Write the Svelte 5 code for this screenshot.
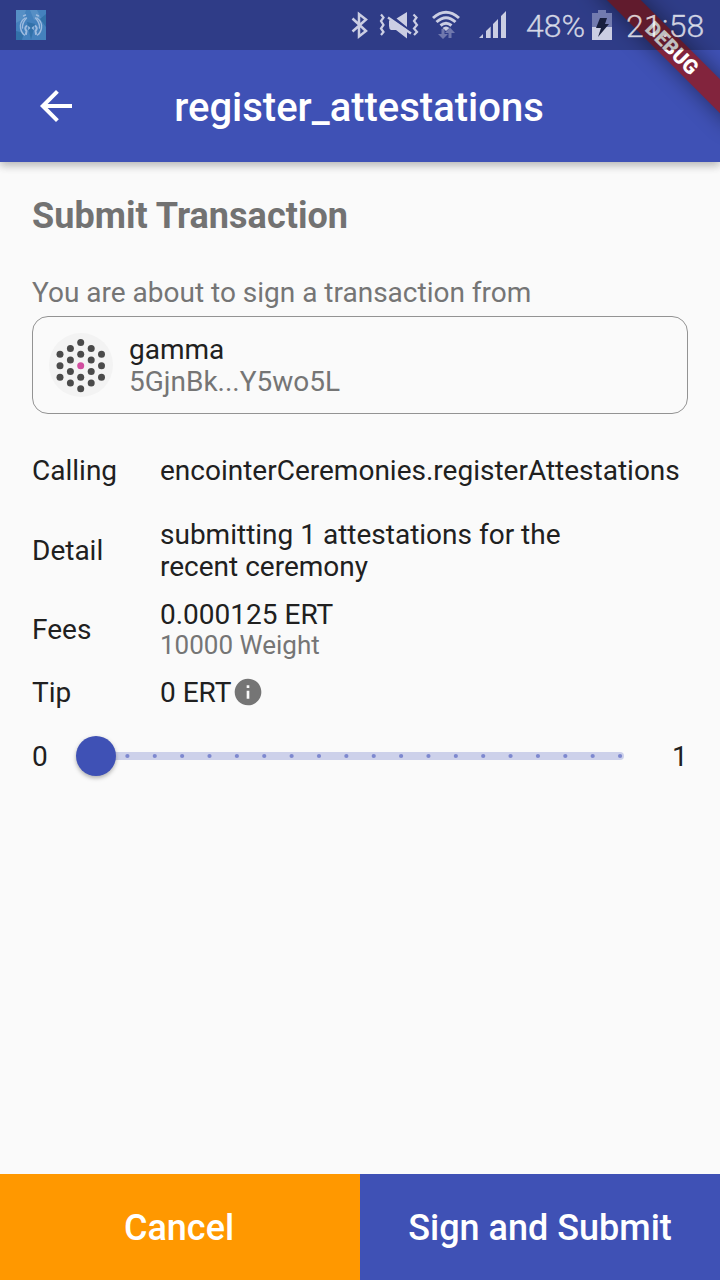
<script>
  const nodes = [
    [31.7, 9.6], [21.4, 15.4], [42.2, 15.4], [11, 21.2], [31.7, 21.2], [52.5, 21.2],
    [21.4, 27], [42.2, 27], [11, 32.8], [52.5, 32.8],
    [21.4, 38.4], [42.2, 38.4], [11, 44.3], [31.7, 44.3], [52.5, 44.3],
    [21.4, 50], [42.2, 50], [31.7, 55.8]
  ];
  const ticks = Array.from({ length: 19 }, (_, i) => 47.4 + i * 27.37);
</script>

<div class="screen">
  <header>
    <svg class="back" width="48" height="48" viewBox="0 0 24 24"><path fill="#fff" d="M20 11H7.83l5.59-5.59L12 4l-8 8 8 8 1.41-1.41L7.83 13H20v-2z" /></svg>
    <h1>register_attestations</h1>
  </header>

  <main>
    <h2>Submit Transaction</h2>
    <p class="intro">You are about to sign a transaction from</p>
    <section class="account">
      <svg width="64" height="64" viewBox="0 0 64 64">
        <circle cx="32" cy="32" r="32" fill="#f3f3f3" />
        {#each nodes as [x, y]}
          <circle cx={x} cy={y} r="3.5" fill="#4a4a4a" />
        {/each}
        <circle cx="31.7" cy="32.8" r="3.5" fill="#d14d9f" />
      </svg>
      <div class="who">
        <span class="name">gamma</span>
        <span class="addr">5GjnBk...Y5wo5L</span>
      </div>
    </section>

    <div class="row calling"><span class="label">Calling</span><span class="val">encointerCeremonies.registerAttestations</span></div>
    <div class="row detail"><span class="label">Detail</span><span class="val">submitting 1 attestations for the<br />recent ceremony</span></div>
    <div class="row fees"><span class="label">Fees</span><span class="val">0.000125 ERT<small>10000 Weight</small></span></div>
    <div class="row tip">
      <span class="label">Tip</span><span class="val">0 ERT</span>
      <svg class="info" width="32" height="32" viewBox="0 0 24 24"><path fill="#757575" d="M12 2C6.48 2 2 6.48 2 12s4.48 10 10 10 10-4.48 10-10S17.52 2 12 2zm1 15h-2v-6h2v6zm0-8h-2V7h2v2z" /></svg>
    </div>
    <div class="slider">
      <span>0</span>
      <svg class="range" width="576" height="64" viewBox="0 0 576 64">
        <path d="M16 28H540a4 4 0 0 1 4 4a4 4 0 0 1-4 4H16z" fill="#cdd1ea" />
        {#each ticks as x}
          <circle cx={x} cy="32" r="2.1" fill="#7d88cf" />
        {/each}
        <circle class="thumb" cx="16" cy="32" r="20" fill="#3f51b5" />
      </svg>
      <span class="max">1</span>
    </div>
  </main>

  <footer>
    <button class="cancel">Cancel</button>
    <button class="submit">Sign and Submit</button>
  </footer>

  <div class="corner"><div class="ribbon">DEBUG</div></div>

  <div class="status">
    <svg class="logo" width="30" height="30" viewBox="0 0 30 30">
      <rect width="30" height="30" fill="#4481bd" />
      <path d="M0 0h10L7 9 0 13zM14 0h7l4 8-7 2z" fill="#568fc5" />
      <path d="M30 4v13l-6-8zM0 21l8 2-2 7H0zM11 12l8 2-4 16z" fill="#3271a9" />
      <g fill="none" stroke="#9dbbdf" stroke-linecap="round">
        <path stroke-width="1.4" d="M7.500 6l2-1M9 8Q3.500 12 4.500 18Q5.500 23 8.500 25M22.500 6l-2-1M21 8Q26.500 12 25.500 18Q24.500 23 21.500 25" />
        <path stroke-width="1.400" d="M10.500 8Q6 13 6.500 18M19.500 8Q24 13 23.500 18M12.500 17l1 1-1 1M17.500 17l-1 1 1 1" />
        <path stroke-width="2" d="M10.500 16Q8 18 10.500 21L10 24M19.500 16Q22 18 19.500 21L20 24" />
      </g>
    </svg>
    <svg width="180" height="50" viewBox="340 0 180 50">
      <g fill="none" stroke="#cbcee3" stroke-width="2.5">
        <path d="M352.500 18.500L366 31L359 36.500V14L366 19.500L352.500 31.500" />
        <path stroke-width="2.200" d="M381 14.500l2.500 3-2.500 3.500 2.500 4-2.500 3.500 2.500 3.500-2.500 3M413.500 14.500l3 3-2.500 3.500 3 4-3 3.500 3 3.500-3 3" />
        <path stroke-width="3" d="M433 18Q446 6.500 459 18M436.500 22Q446 13.500 455.500 22M440.500 25.500Q446 21 451.500 25.500" />
      </g>
      <g fill="#cbcee3">
        <path d="M396.500 18.500L407 12V27zM389 20.500l3-1 15 10V38.500L396 30H391q-2-1-2-4z" />
        <path d="M388 17.500l23 16" stroke="#cbcee3" stroke-width="2.400" />
        <path d="M442.500 28Q446 25 449.500 28L446 31z" />
        <path d="M479 38l4-4v4zM486 31l4.700-4.500V38H486zM493 24l5-5v19h-5zM501 16l5-5v27h-5z" />
      </g>
      <path d="M441.500 29h3v5h3.500l-5 5-5-5h3.500zM448.500 38v-5H445l5-5.500 5 5.500h-3.500v5z" fill="#7078ad" />
    </svg>
    <span class="pct">48%</span>
    <svg class="battery" width="20" height="30" viewBox="0 0 20 30">
      <path d="M0 3h6V0h8v3h6v14H0z" fill="#727baf" />
      <path d="M0 17h20v13H0z" fill="#cbcee3" />
      <path d="M8 8h7l-2 6h4L6 27l3-9H4z" fill="#181f3d" />
    </svg>
    <span class="time">21:58</span>
  </div>
</div>

<style>
  :global(body) { margin: 0; background: #fafafa; }
  .screen {
    position: relative; width: 720px; height: 1280px; overflow: hidden;
    display: flex; flex-direction: column; background: #fafafa;
    font: 400 28px/32px Roboto, sans-serif; color: #202020; box-sizing: border-box;
  }
  header {
    height: 162px; flex: none; padding: 50px 0 0; box-sizing: border-box;
    display: grid; grid-template-columns: 112px 494px 1fr; align-items: center;
    background: #3f51b5; color: #fff;
    box-shadow: 0 4px 8px rgba(0,0,0,.18), 0 2px 10px rgba(0,0,0,.12);
  }
  .back { margin-left: 32px; }
  h1 { margin: 4px 0 0; font-size: 40px; line-height: 48px; font-weight: 500; text-align: center; white-space: nowrap; }
  main { flex: 1; padding: 33px 32px 0; }
  h2 { margin: 0; font-size: 36px; line-height: 42px; font-weight: 700; color: #727272; letter-spacing: .04px; }
  .intro { margin: 40px 0 7px; color: #757575; }
  .account {
    height: 98px; box-sizing: border-box; border: 1px solid #939393; border-radius: 16px;
    display: flex; align-items: center; gap: 16px; padding-left: 16px;
  }
  .who { display: flex; flex-direction: column; padding-top: 2px; }
  .addr { color: #757575; }
  .row { display: flex; align-items: center; }
  .label { width: 128px; }
  .val { white-space: nowrap; }
  .calling { margin-top: 41px; }
  .detail { margin-top: 32px; }
  .fees { margin-top: 16px; }
  .fees small { display: block; font-size: 26px; line-height: 28px; padding-bottom: 2px; color: #757575; }
  .tip { margin-top: 16px; }
  .info { margin: -2px 0 0 1px; }
  .slider { display: grid; grid-template-columns: 48px 576px 1fr; align-items: center; margin-top: 17px; }
  .range { overflow: visible; margin: -2px 0 0; }
  .max { margin-left: 16px; }
  .thumb { filter: drop-shadow(0 2px 2px rgba(0,0,0,.3)); }
  footer { display: grid; grid-template-columns: 360px 360px; height: 106px; flex: none; }
  button { border: 0; padding: 2px 2px 0 0; color: #fff; font: 500 36px/42px Roboto, sans-serif; }
  .cancel { background: #ff9800; }
  .submit { background: #3f51b5; padding-right: 0; }
  .corner { position: absolute; top: 0; right: 0; width: 170px; height: 170px; overflow: hidden; }
  .ribbon {
    position: absolute; left: 70px; top: 56px; width: 200px; height: 24px;
    transform-origin: 100px -56px; transform: rotate(45deg);
    background: #82243d; color: #fff; text-align: center;
    font-size: 20.4px; line-height: 24px; font-weight: 900;
    box-shadow: 0 0 22px rgba(0,0,0,.45);
  }
  .status {
    position: absolute; inset: 0 0 auto; height: 50px; box-sizing: border-box; padding-left: 16px;
    display: flex; align-items: center; background: rgba(0,0,0,.25);
    font-size: 32px; font-weight: 300; color: rgba(255,255,255,.75);
    -webkit-text-stroke: .35px rgba(255,255,255,.6);
  }
  .status > svg { flex: none; }
  .logo { margin-right: 294px; }
  .pct { width: 66px; margin-left: 6px; padding-top: 2px; }
  .time { margin-left: 14px; padding-top: 2px; letter-spacing: .15px; }
</style>
